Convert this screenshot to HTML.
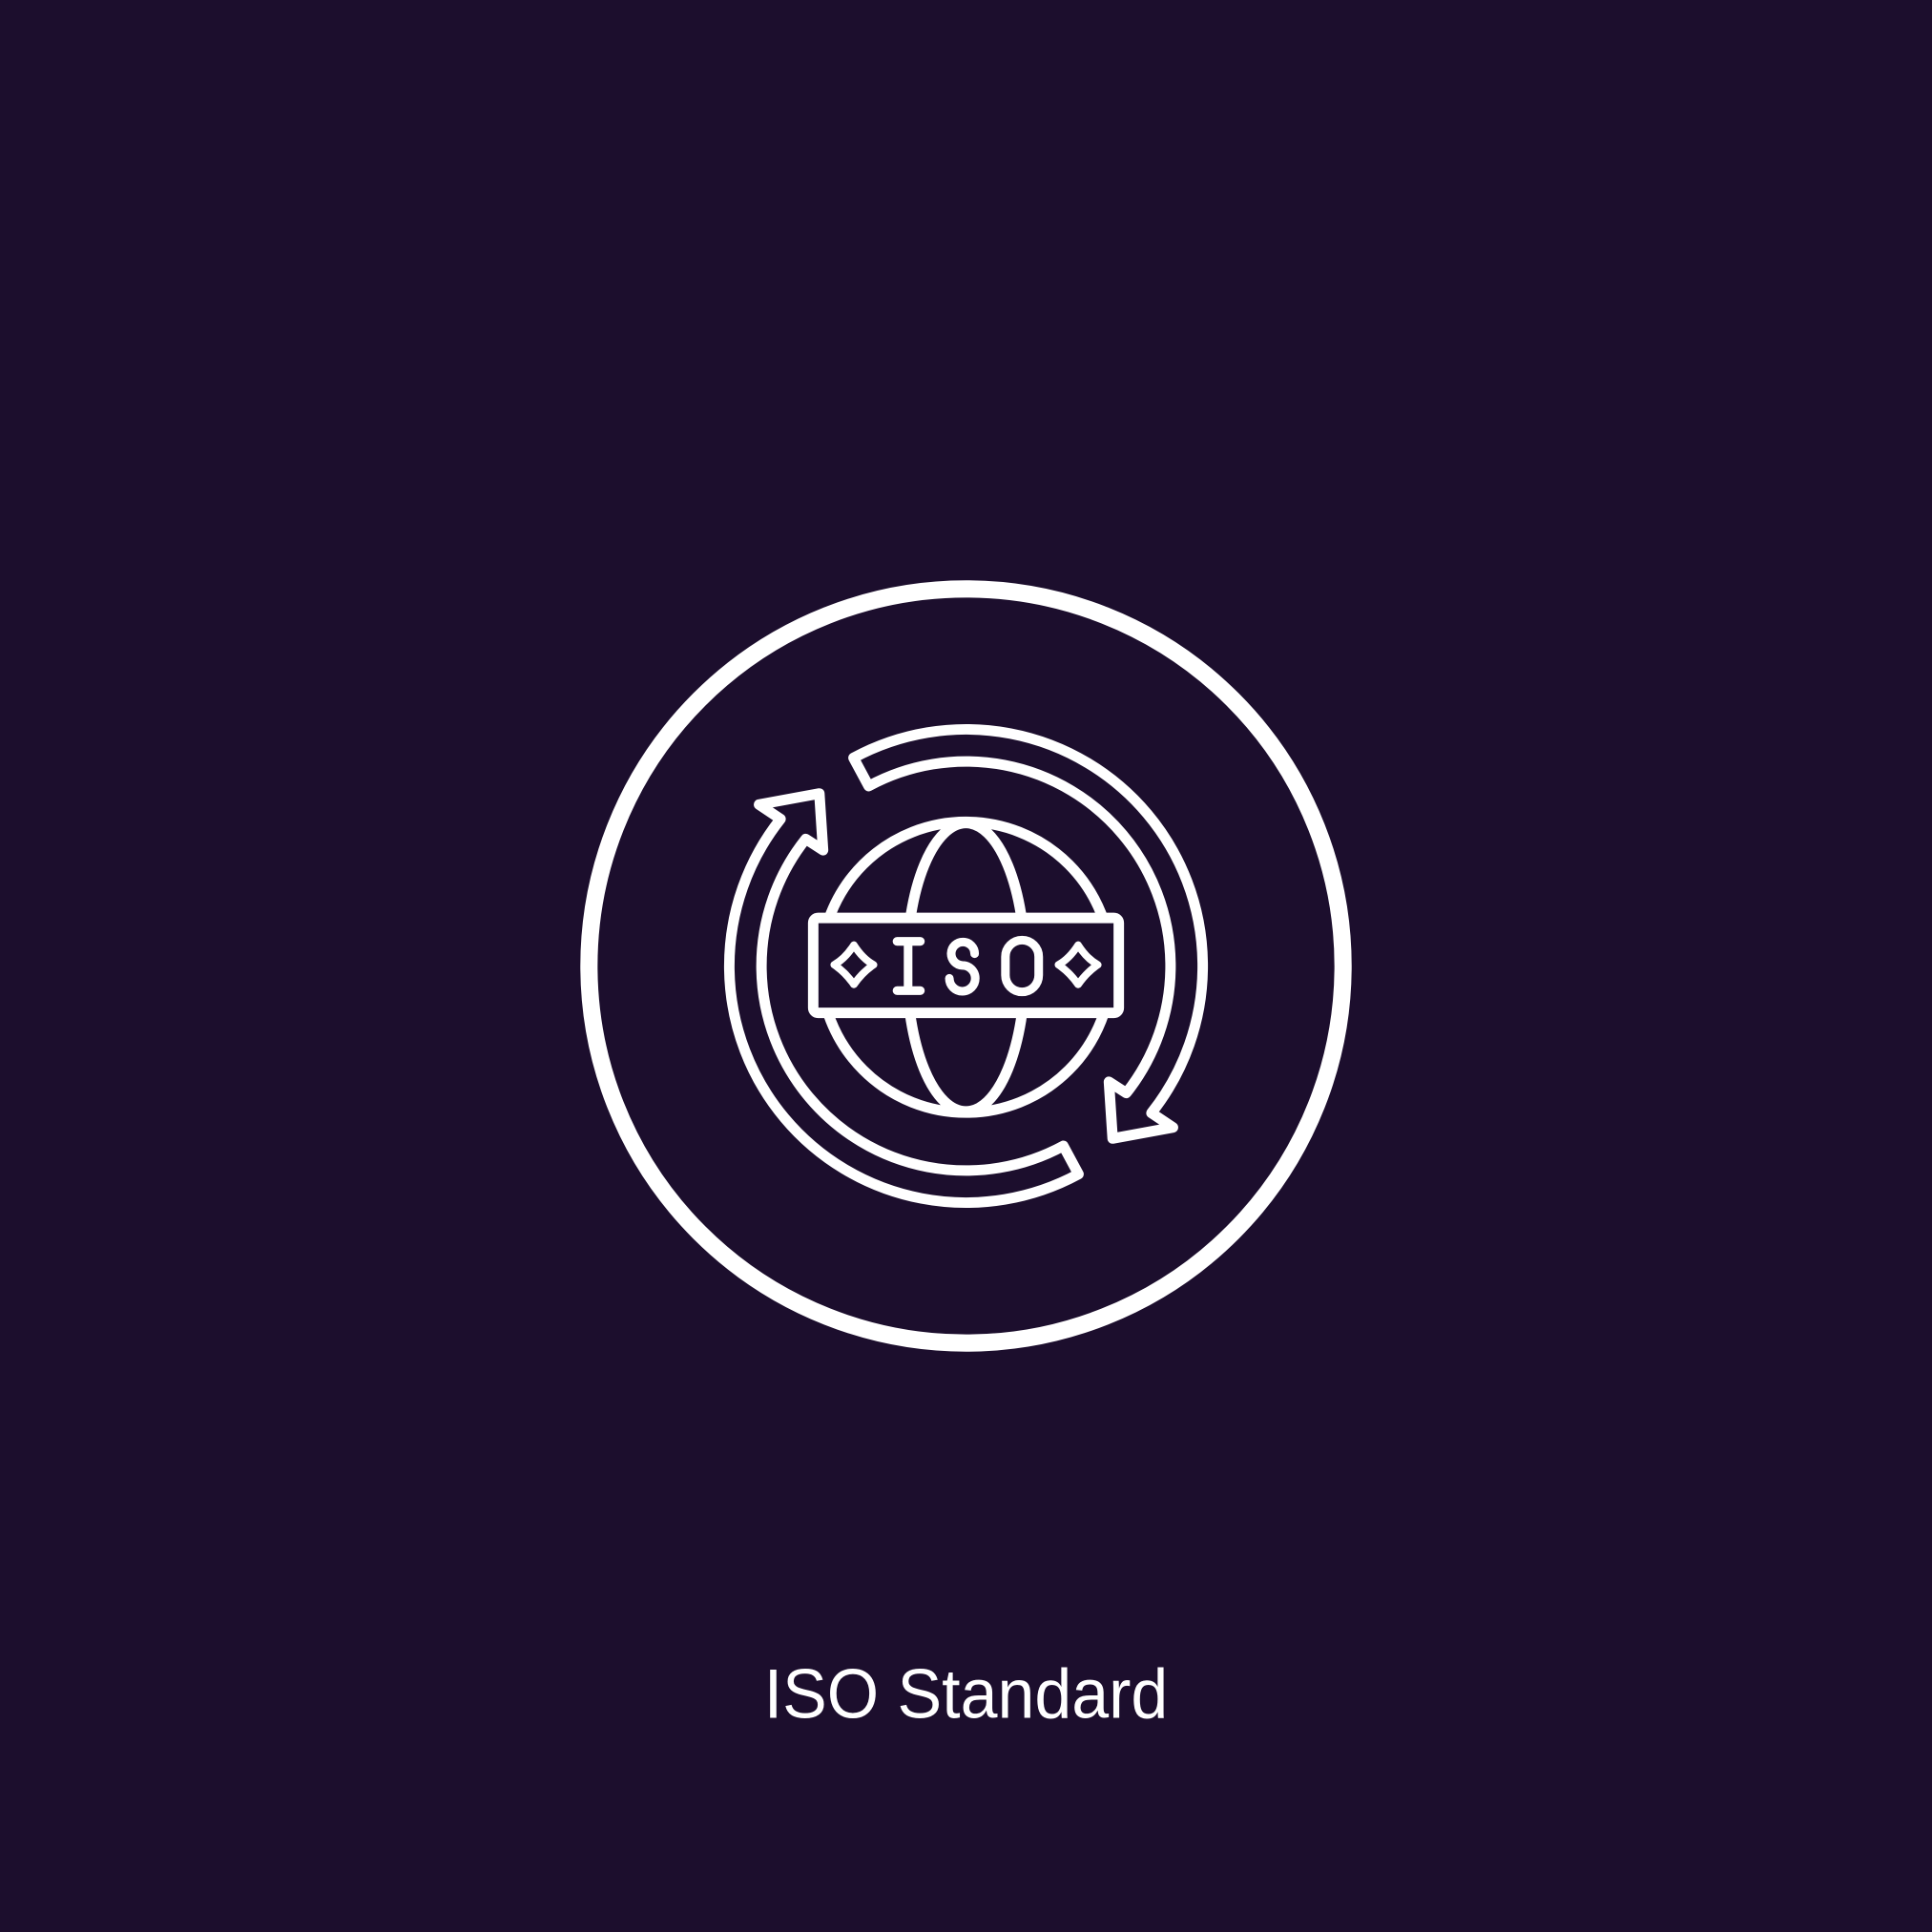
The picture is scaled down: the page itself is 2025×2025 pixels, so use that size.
<!DOCTYPE html>
<html><head><meta charset="utf-8"><style>
html,body{margin:0;padding:0;background:#1c0e2d;}
svg{display:block;}
</style></head><body>
<svg width="2025" height="2025" viewBox="0 0 1568 1568" xmlns="http://www.w3.org/2000/svg">
<rect width="1568" height="1568" fill="#1c0e2d"/>
<g fill="none" stroke="#fff" stroke-linejoin="round" stroke-linecap="round">
<circle cx="784" cy="784" r="306" stroke-width="14"/>
<path stroke-width="8.5" d="M692.7,615.1 A192,192 0 0 1 934.5,903.3 L952,915 L903,924 L900,878 L914.1,887.1 A166,166 0 0 0 705,638 Z"/>
<path stroke-width="8.5" transform="rotate(180 784 784)" d="M692.7,615.1 A192,192 0 0 1 934.5,903.3 L952,915 L903,924 L900,878 L914.1,887.1 A166,166 0 0 0 705,638 Z"/>
<circle cx="784" cy="785" r="118" stroke-width="8.5"/>
<ellipse cx="784" cy="785" rx="48" ry="117" stroke-width="8.5"/>
<rect x="660" y="745" width="248" height="77" rx="4" fill="#1c0e2d" stroke-width="8.5"/>
<path stroke-width="7" d="M728,764 H747 M737,764 V804 M728,804 H747"/>
<path stroke-width="7" d="M791,774 A9.5,9.5 0 1 0 781,783.5 A10.5,10.5 0 1 1 770.5,794"/>
<rect x="816" y="763" width="27" height="42" rx="13.5" stroke-width="7"/>
<path stroke-width="6" d="M693,767 Q700,778 709,783 Q700,789 693,799 Q686,789 677,783 Q686,778 693,767 Z"/>
<path stroke-width="6" d="M875,767 Q882,778 891,783 Q882,789 875,799 Q868,789 859,783 Q868,778 875,767 Z"/>
</g>
<text x="784" y="1394" fill="#fff" font-family="Liberation Sans, sans-serif" font-size="57" text-anchor="middle" textLength="328" lengthAdjust="spacingAndGlyphs">ISO Standard</text>
</svg>
</body></html>
